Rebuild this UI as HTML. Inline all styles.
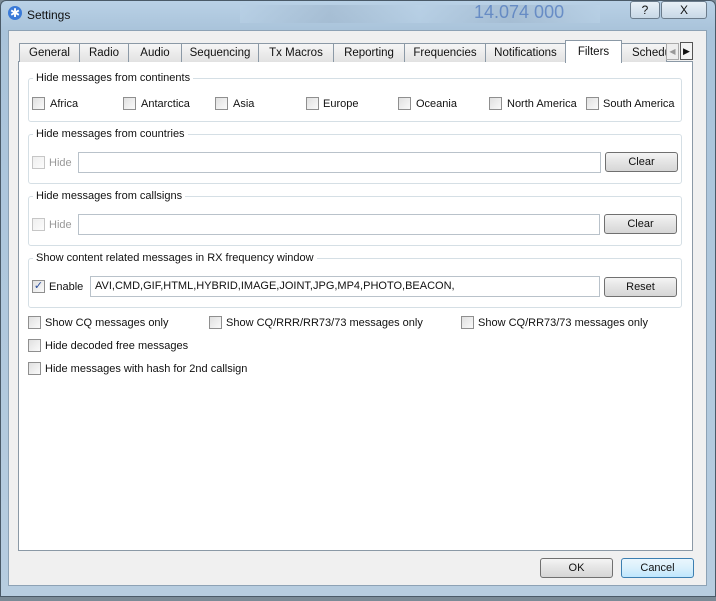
<!DOCTYPE html>
<html><head><style>
*{box-sizing:border-box}
body{margin:0;width:716px;height:601px;overflow:hidden;background:#7a8a96;font-family:"Liberation Sans",sans-serif;font-size:11px;color:#111}
.a{position:absolute}
.win{left:0;top:0;width:716px;height:597px;background:linear-gradient(#b9d1e6,#a9c3da 30px,#b7cde0);border:1px solid #4a5a68;border-radius:6px 6px 0 0}
.dlg{left:8px;top:30px;width:699px;height:556px;background:#f0f0f0;border:1px solid #8da2b5}
.page{left:18px;top:61px;width:675px;height:490px;background:#fff;border:1px solid #8b99a6}
.tab{top:43px;height:19px;background:linear-gradient(#f6f6f6,#e2e2e2);border:1px solid #8b99a6;border-bottom:none;text-align:center;line-height:18px;font-size:11.5px}
.grp{left:28px;width:654px;border:1px solid #d5dfe5;border-radius:3px}
.gl{background:#fff;padding:0 3px;font-size:11px}
.cb{width:13px;height:13px;border:1px solid #8f8f8f;background:linear-gradient(135deg,#e0e0e0,#fafafa)}
.t{font-size:11px;white-space:nowrap}
.inp{height:21px;border:1px solid #b9c2ca;background:#fff}
.btn{height:20px;border:1px solid #707070;border-radius:3px;background:linear-gradient(#f4f4f4,#e4e4e4 50%,#d6d6d6);text-align:center;line-height:18px;font-size:11px}
</style></head><body>
<div class="a win"></div>
<div class="a" style="left:8px;top:6px;width:14px;height:14px;border-radius:50%;background:#3a7ad8;color:#fff;font-size:12px;line-height:14px;text-align:center">✱</div>
<div class="a t" style="left:27px;top:8px;font-size:12px">Settings</div>
<div class="a" style="left:240px;top:5px;width:360px;height:18px;background:linear-gradient(90deg,#b9d1e6,#9fb6cc,#b9d1e6,#9fb6cc,#b9d1e6);opacity:.6"></div>
<div class="a" style="left:474px;top:2px;font-size:18px;color:#3a68b8;opacity:.6">14.074 000</div>
<div class="a" style="left:630px;top:1px;width:30px;height:18px;border:1px solid #6b7c8c;border-radius:3px;background:linear-gradient(#e8f0f7,#c8d8e6);text-align:center;font-size:12px;line-height:16px">?</div>
<div class="a" style="left:661px;top:1px;width:46px;height:18px;border:1px solid #6b7c8c;border-radius:3px;background:linear-gradient(#e8f0f7,#c8d8e6);text-align:center;font-size:12px;line-height:16px">X</div>
<div class="a dlg"></div>
<div class="a page"></div>
<div class="a tab" style="left:19px;width:61px">General</div>
<div class="a tab" style="left:79px;width:50px">Radio</div>
<div class="a tab" style="left:128px;width:54px">Audio</div>
<div class="a tab" style="left:181px;width:78px">Sequencing</div>
<div class="a tab" style="left:258px;width:76px">Tx Macros</div>
<div class="a tab" style="left:333px;width:72px">Reporting</div>
<div class="a tab" style="left:404px;width:82px">Frequencies</div>
<div class="a tab" style="left:485px;width:81px">Notifications</div>
<div class="a tab" style="left:621px;width:46px;text-align:left;padding-left:10px;overflow:hidden">Schedu</div>
<div class="a tab" style="left:565px;top:40px;height:23px;width:57px;background:#fff;line-height:22px">Filters</div>
<div class="a" style="left:666px;top:43px;width:13px;height:17px;border:1px solid #aaa;background:#eee;font-size:8px;color:#999;text-align:center;line-height:16px">◀</div>
<div class="a" style="left:680px;top:42px;width:13px;height:18px;border:1px solid #555;background:#f4f4f4;font-size:9px;text-align:center;line-height:17px">▶</div>

<div class="a grp" style="top:78px;height:44px"></div>
<div class="a gl" style="left:33px;top:72px">Hide messages from continents</div>
<div class="a cb" style="left:32px;top:97px"></div><div class="a t" style="left:50px;top:98px">Africa</div>
<div class="a cb" style="left:123px;top:97px"></div><div class="a t" style="left:141px;top:98px">Antarctica</div>
<div class="a cb" style="left:215px;top:97px"></div><div class="a t" style="left:233px;top:98px">Asia</div>
<div class="a cb" style="left:306px;top:97px"></div><div class="a t" style="left:323px;top:98px">Europe</div>
<div class="a cb" style="left:398px;top:97px"></div><div class="a t" style="left:416px;top:98px">Oceania</div>
<div class="a cb" style="left:489px;top:97px"></div><div class="a t" style="left:507px;top:98px">North America</div>
<div class="a cb" style="left:586px;top:97px"></div><div class="a t" style="left:603px;top:98px">South America</div>

<div class="a grp" style="top:134px;height:50px"></div>
<div class="a gl" style="left:33px;top:128px">Hide messages from countries</div>
<div class="a cb" style="left:32px;top:156px;opacity:.5"></div><div class="a t" style="left:49px;top:157px;color:#999">Hide</div>
<div class="a inp" style="left:78px;top:152px;width:523px"></div>
<div class="a btn" style="left:605px;top:152px;width:73px">Clear</div>

<div class="a grp" style="top:196px;height:50px"></div>
<div class="a gl" style="left:33px;top:190px">Hide messages from callsigns</div>
<div class="a cb" style="left:32px;top:218px;opacity:.5"></div><div class="a t" style="left:49px;top:219px;color:#999">Hide</div>
<div class="a inp" style="left:78px;top:214px;width:522px"></div>
<div class="a btn" style="left:604px;top:214px;width:73px">Clear</div>

<div class="a grp" style="top:258px;height:50px"></div>
<div class="a gl" style="left:33px;top:252px">Show content related messages in RX frequency window</div>
<div class="a cb" style="left:32px;top:280px;font-size:11px;line-height:11px;color:#2a4d9a;text-align:center">✓</div><div class="a t" style="left:49px;top:281px">Enable</div>
<div class="a inp" style="left:90px;top:276px;width:510px;padding:3px 4px" ><span class="t">AVI,CMD,GIF,HTML,HYBRID,IMAGE,JOINT,JPG,MP4,PHOTO,BEACON,</span></div>
<div class="a btn" style="left:604px;top:277px;width:73px">Reset</div>

<div class="a cb" style="left:28px;top:316px"></div><div class="a t" style="left:45px;top:317px">Show CQ messages only</div>
<div class="a cb" style="left:209px;top:316px"></div><div class="a t" style="left:226px;top:317px">Show CQ/RRR/RR73/73 messages only</div>
<div class="a cb" style="left:461px;top:316px"></div><div class="a t" style="left:478px;top:317px">Show CQ/RR73/73 messages only</div>
<div class="a cb" style="left:28px;top:339px"></div><div class="a t" style="left:45px;top:340px">Hide decoded free messages</div>
<div class="a cb" style="left:28px;top:362px"></div><div class="a t" style="left:45px;top:363px">Hide messages with hash for 2nd callsign</div>

<div class="a btn" style="left:540px;top:558px;width:73px">OK</div>
<div class="a btn" style="left:621px;top:558px;width:73px;border-color:#3c7fb1;background:linear-gradient(#eaf6fd,#d9f0fc 50%,#bee6fd)">Cancel</div>
</body></html>
